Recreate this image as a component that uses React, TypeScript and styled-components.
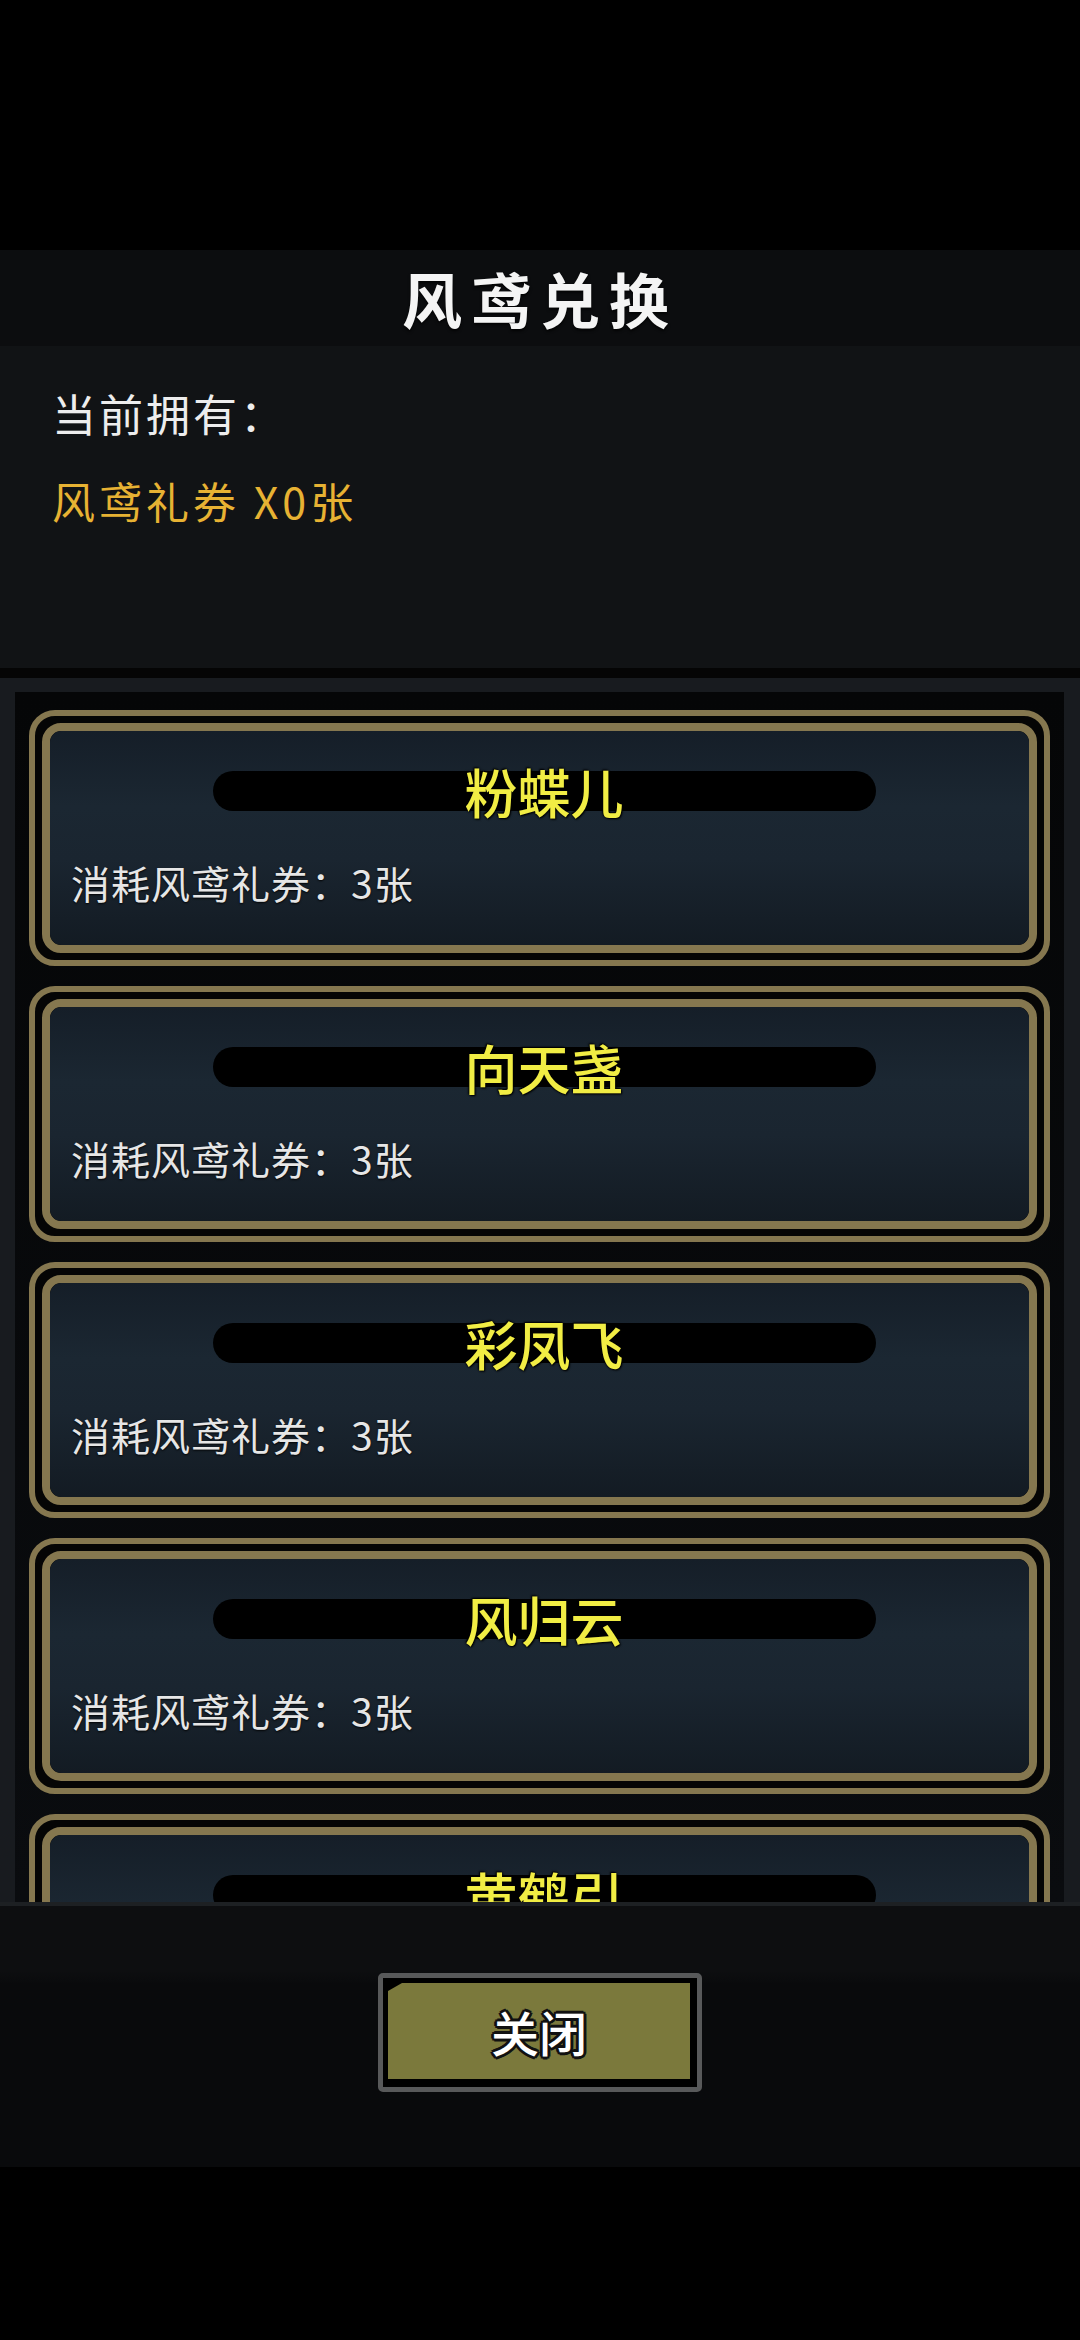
import React from 'react'
import styled, { createGlobalStyle } from 'styled-components'

const GlobalStyle = createGlobalStyle`
    html, body {
        margin: 0;
        padding: 0;
        background: #000;
    }
    body {
        font-family: "Noto Sans CJK SC", "Noto Sans", sans-serif;
    }
`

const Screen = styled.div`
    width: 1080px;
    height: 2340px;
    display: flex;
    flex-direction: column;
    background: #000;
    overflow: hidden;
`

const TopSpace = styled.div`
    height: 250px;
    flex-shrink: 0;
`

const TitleBar = styled.div`
    height: 96px;
    flex-shrink: 0;
    display: flex;
    align-items: center;
    justify-content: center;
    background: #0c0d0f;
`

const Title = styled.h1`
    margin: 0;
    font-size: 60px;
    font-weight: 700;
    line-height: 1;
    letter-spacing: 9px;
    color: #f4f4f4;
    text-shadow: 0 2px 3px rgba(0, 0, 0, 0.8);
`

const InfoPanel = styled.div`
    height: 332px;
    flex-shrink: 0;
    box-sizing: border-box;
    padding: 41px 0 0 52px;
    background: #111315;
    border-bottom: 10px solid #050505;
`

const OwnedLabel = styled.div`
    font-size: 44px;
    line-height: 1.2;
    letter-spacing: 3px;
    color: #ededed;
`

const OwnedValue = styled.div`
    margin-top: 35px;
    font-size: 43px;
    line-height: 1.2;
    letter-spacing: 4px;
    color: #e7b233;
`

const ListFrame = styled.div`
    height: 1224px;
    flex-shrink: 0;
    box-sizing: border-box;
    padding: 14px 16px 0 15px;
    background: #181b1f;
`

const Viewport = styled.div`
    height: 100%;
    box-sizing: border-box;
    padding: 18px 14px 0 14px;
    display: flex;
    flex-direction: column;
    gap: 20px;
    overflow: hidden;
    background: linear-gradient(#050607, #0a0c0f);
`

const Card = styled.div`
    height: 256px;
    flex-shrink: 0;
    box-sizing: border-box;
    padding: 7px;
    border: 6px solid #85774f;
    border-radius: 26px;
    background: #050505;
`

const CardInner = styled.div`
    height: 100%;
    box-sizing: border-box;
    border: 8px solid #85774f;
    border-radius: 19px;
    overflow: hidden;
`

const CardBody = styled.div`
    height: 100%;
    box-sizing: border-box;
    padding: 40px 0 0 21px;
    border-radius: 11px;
    background: linear-gradient(#151e28 0%, #1b2732 35%, #1a2530 60%, #131b23 100%);
`

const NamePill = styled.div`
    width: 663px;
    height: 40px;
    margin: 0 auto;
    transform: translateX(-6px);
    border-radius: 20px;
    background: #000;
    display: flex;
    align-items: center;
    justify-content: center;
`

const NameText = styled.span`
    font-size: 53px;
    font-weight: 500;
    line-height: 40px;
    color: #f1ed44;
    white-space: nowrap;
    text-shadow: 0 0 2px #000, 1px 1px 2px #000, -1px -1px 2px #000;
`

const CostText = styled.div`
    margin-top: 48px;
    font-size: 39px;
    line-height: 1.2;
    letter-spacing: 1px;
    color: #e6e6e6;
    text-shadow: 0 1px 2px rgba(0, 0, 0, 0.9);
`

const Footer = styled.div`
    height: 265px;
    flex-shrink: 0;
    box-sizing: border-box;
    padding-top: 67px;
    display: flex;
    justify-content: center;
    align-items: flex-start;
    border-top: 4px solid #1d2023;
    background: linear-gradient(#0d0e10 0%, #0d0e10 25%, #090a0c 30%, #090a0c 100%);
`

const CloseButton = styled.button`
    width: 324px;
    height: 119px;
    box-sizing: border-box;
    padding: 5px 7px 8px 5px;
    border: 5px solid #58595a;
    border-radius: 5px;
    background: #000;
    cursor: pointer;
`

const ButtonFace = styled.div`
    height: 100%;
    display: flex;
    align-items: center;
    justify-content: center;
    background: #7b793c;
    clip-path: polygon(14px 0, 100% 0, 100% 100%, 0 100%, 0 8px);
    font-family: "Noto Sans CJK SC", sans-serif;
    font-size: 48px;
    font-weight: 500;
    color: #fff;
    text-shadow:
        3px 0 0 #111, -3px 0 0 #111, 0 3px 0 #111, 0 -3px 0 #111,
        2px 2px 0 #111, -2px -2px 0 #111, 2px -2px 0 #111, -2px 2px 0 #111;
`

const BottomSpace = styled.div`
    flex: 1;
    background: #000;
`

const items = ['粉蝶儿', '向天盏', '彩凤飞', '风归云', '黄鹤引']

const App = () => {
    return (
        <Screen>
            <GlobalStyle />
            <TopSpace />
            <TitleBar>
                <Title>风鸢兑换</Title>
            </TitleBar>
            <InfoPanel>
                <OwnedLabel>当前拥有：</OwnedLabel>
                <OwnedValue>风鸢礼券 X0张</OwnedValue>
            </InfoPanel>
            <ListFrame>
                <Viewport>
                    {items.map((name) => (
                        <Card key={name}>
                            <CardInner>
                                <CardBody>
                                    <NamePill>
                                        <NameText>{name}</NameText>
                                    </NamePill>
                                    <CostText>消耗风鸢礼券：3张</CostText>
                                </CardBody>
                            </CardInner>
                        </Card>
                    ))}
                </Viewport>
            </ListFrame>
            <Footer>
                <CloseButton>
                    <ButtonFace>关闭</ButtonFace>
                </CloseButton>
            </Footer>
            <BottomSpace />
        </Screen>
    )
}

export default App
